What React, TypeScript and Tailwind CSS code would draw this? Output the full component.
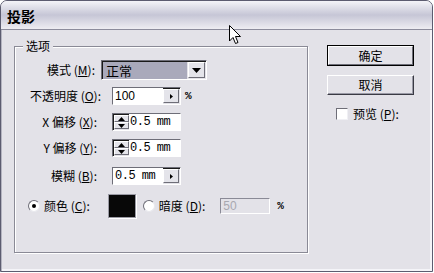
import React from "react";

const cjk = "font-['SimSun','Noto_Sans_CJK_SC',sans-serif]";

function Key({ k }: { k: string }) {
  return (
    <span>
      {" "}(<span className="underline underline-offset-1">{k}</span>):
    </span>
  );
}

// sunken edit field
function Field({ w, children, className = "" }: { w: string; children: React.ReactNode; className?: string }) {
  return (
    <div
      className={`${w} h-[18px] flex items-stretch border border-t-[#6e6e78] border-l-[#6e6e78] border-b-white border-r-white shadow-[inset_1px_1px_0_#1a1a1a] ${className}`}
    >
      {children}
    </div>
  );
}

function ArrowBtn() {
  return (
    <div className="w-[16px] mt-[1px] mb-[1px] mr-[1px] bg-[#e4e4ea] border border-t-white border-l-white border-b-[#6e6e78] border-r-[#6e6e78] flex items-center justify-center">
      <svg width="3" height="5" viewBox="0 0 3 5">
        <path d="M0 0 L3 2.5 L0 5 Z" fill="#000" />
      </svg>
    </div>
  );
}

function Spinner() {
  return (
    <div className="w-[15px] mt-[1px] mb-[1px] ml-[1px] flex flex-col">
      <div className="flex-1 bg-[#e4e4ea] border border-t-white border-l-white border-b-[#6e6e78] border-r-[#6e6e78] flex items-center justify-center">
        <svg width="7" height="4" viewBox="0 0 7 4">
          <path d="M0 4 L3.5 0 L7 4 Z" fill="#000" />
        </svg>
      </div>
      <div className="flex-1 bg-[#e4e4ea] border border-t-white border-l-white border-b-[#6e6e78] border-r-[#6e6e78] flex items-center justify-center">
        <svg width="7" height="4" viewBox="0 0 7 4">
          <path d="M0 0 L3.5 4 L7 0 Z" fill="#000" />
        </svg>
      </div>
    </div>
  );
}

function Radio({ checked }: { checked?: boolean }) {
  return (
    <div className="w-[12px] h-[12px] rounded-full bg-white border border-t-[#6e6e78] border-l-[#6e6e78] border-b-[#e8e8ee] border-r-[#e8e8ee] flex items-center justify-center">
      {checked && <div className="w-[4px] h-[4px] rounded-full bg-black" />}
    </div>
  );
}

export default function App() {
  return (
    <div className={`relative w-[434px] h-[273px] bg-white text-[12px] text-black ${cjk}`}>
      <div className="w-[433px] h-[272px] rounded-t-[7px] border border-[#5c5c70] bg-[#e3e2e8] flex flex-col overflow-hidden shadow-[inset_0_-2px_0_#f4f4f8,inset_-2px_0_0_#f4f4f8]">
        {/* title bar */}
        <div className="h-[29px] shrink-0 bg-gradient-to-b from-[#f4f4f8] via-[#c6c6d6] to-[#eeedf2] border-b border-[#8c8c9c] flex items-center pl-[6px] pt-[3px]">
          <span className="font-bold text-[14px]">投影</span>
        </div>

        {/* body */}
        <div className="flex flex-1 pl-[12px] border-l border-[#b4b4c0]">
          {/* options group */}
          <div className="relative mt-[16px] w-[294px] h-[207px] border border-[#8a8a96] shadow-[1px_1px_0_#fff,inset_1px_1px_0_#fff] pt-[10px] flex flex-col">
            <span className="absolute -top-[9px] left-[8px] px-[3px] bg-[#e3e2e8] leading-[16px]">选项</span>

            <div className="h-[26px] flex items-center">
              <span className="w-[80px] text-right">模式<Key k="M" /></span>
              <div className="ml-[6px] w-[106px] h-[20px] flex border border-t-[#6e6e78] border-l-[#6e6e78] border-b-white border-r-white shadow-[inset_1px_1px_0_#1a1a1a]">
                <div className="flex-1 bg-[#a9a9bb] pl-[3px] flex items-center text-[13px] mt-[1px] ml-[1px]">正常</div>
                <div className="w-[17px] m-[1px] bg-[#e4e4ea] border border-t-white border-l-white border-b-[#6e6e78] border-r-[#6e6e78] flex items-center justify-center">
                  <svg width="9" height="5" viewBox="0 0 9 5">
                    <path d="M0 0 L9 0 L4.5 5 Z" fill="#000" />
                  </svg>
                </div>
              </div>
            </div>

            <div className="h-[26px] flex items-center">
              <span className="w-[86px] text-right">不透明度<Key k="O" /></span>
              <Field w="w-[69px] ml-[11px]">
                <span className="flex-1 bg-white pl-[2px] flex items-center font-['Liberation_Sans',sans-serif] text-[12px]">100</span>
                <ArrowBtn />
              </Field>
              <span className="ml-[4px] font-['Liberation_Mono',monospace] font-bold text-[11px]">%</span>
            </div>

            <div className="h-[26px] flex items-center">
              <span className="w-[82px] text-right">X 偏移<Key k="X" /></span>
              <Field w="w-[69px] ml-[15px]">
                <Spinner />
                <span className="flex-1 bg-white pl-[1px] flex items-center font-['Liberation_Mono',monospace] text-[12px] tracking-[-0.5px]">0.5 mm</span>
              </Field>
            </div>

            <div className="h-[26px] flex items-center">
              <span className="w-[82px] text-right">Y 偏移<Key k="Y" /></span>
              <Field w="w-[69px] ml-[15px]">
                <Spinner />
                <span className="flex-1 bg-white pl-[1px] flex items-center font-['Liberation_Mono',monospace] text-[12px] tracking-[-0.5px]">0.5 mm</span>
              </Field>
            </div>

            <div className="h-[30px] flex items-center">
              <span className="w-[82px] text-right">模糊<Key k="B" /></span>
              <Field w="w-[69px] ml-[15px]">
                <span className="flex-1 bg-white pl-[2px] flex items-center font-['Liberation_Mono',monospace] text-[12px] tracking-[-0.5px]">0.5 mm</span>
                <ArrowBtn />
              </Field>
            </div>

            <div className="h-[30px] flex items-center pl-[13px]">
              <Radio checked />
              <span className="ml-[4px]">颜色<Key k="C" /></span>
              <div className="ml-[18px] w-[28px] h-[24px] bg-[#080808] border border-[#9a9aa4] shadow-[1px_1px_0_#fff]" />
              <div className="ml-[7px]"><Radio /></div>
              <span className="ml-[4px]">暗度<Key k="D" /></span>
              <div className="ml-[15px] w-[50px] h-[16px] bg-[#e3e2e8] border border-t-[#8a8a96] border-l-[#8a8a96] border-b-white border-r-white flex items-center pl-[2px] text-[#a8a8b0] font-['Liberation_Sans',sans-serif]">50</div>
              <span className="ml-[7px] font-['Liberation_Mono',monospace] font-bold text-[11px]">%</span>
            </div>
          </div>

          {/* buttons column */}
          <div className="ml-[19px] mt-[15px] flex flex-col">
            <button className="w-[87px] h-[21px] border border-black bg-[#e3e2e8] flex">
              <span className="flex-1 flex items-center justify-center border border-t-white border-l-white border-b-[#6e6e78] border-r-[#6e6e78]">确定</span>
            </button>
            <button className="mt-[9px] w-[87px] h-[20px] bg-[#e3e2e8] flex items-center justify-center border border-t-white border-l-white border-b-[#3a3a44] border-r-[#3a3a44] shadow-[inset_-1px_-1px_0_#9a9aa6]">
              取消
            </button>
            <div className="mt-[10px] ml-[9px] flex items-center">
              <div className="w-[12px] h-[12px] bg-white border border-t-[#6e6e78] border-l-[#6e6e78] border-b-[#f0f0f4] border-r-[#f0f0f4]" />
              <span className="ml-[5px]">预览<Key k="P" /></span>
            </div>
          </div>
        </div>
      </div>

      {/* mouse pointer */}
      <svg className="absolute left-[229px] top-[25px]" width="14" height="21" viewBox="0 0 14 21">
        <path d="M0.5 0.5 L0.5 16 L4 12.5 L6.5 18.5 L9 17.5 L6.5 11.5 L11.5 11.5 Z" fill="#fff" stroke="#000" strokeWidth="1" />
      </svg>
    </div>
  );
}
